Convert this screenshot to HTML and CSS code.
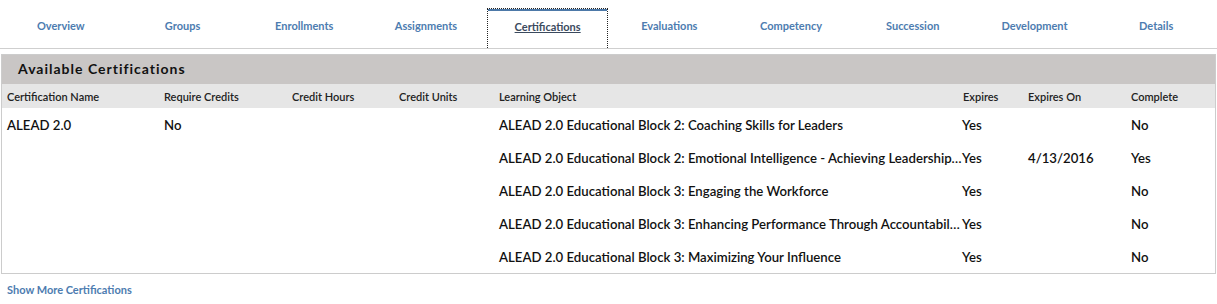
FILE: index.html
```html
<!DOCTYPE html>
<html lang="en">

<head>
    <meta charset="UTF-8">
    <title>Certifications</title>
    <link rel="stylesheet" href="styles.css">
</head>

<body>

    <nav class="tabs">
        <a href="#" class="tab">Overview</a>
        <a href="#" class="tab">Groups</a>
        <a href="#" class="tab">Enrollments</a>
        <a href="#" class="tab">Assignments</a>
        <a href="#" class="tab active">Certifications</a>
        <a href="#" class="tab">Evaluations</a>
        <a href="#" class="tab">Competency</a>
        <a href="#" class="tab">Succession</a>
        <a href="#" class="tab">Development</a>
        <a href="#" class="tab">Details</a>
    </nav>

    <div class="panel">
        <div class="panel-title">Available Certifications</div>
        <table class="certs">
            <colgroup>
                <col style="width: 157px">
                <col style="width: 128px">
                <col style="width: 107px">
                <col style="width: 100px">
                <col style="width: 468px">
                <col style="width: 61px">
                <col style="width: 103px">
                <col>
            </colgroup>
            <thead>
                <tr>
                    <th>Certification Name</th>
                    <th>Require Credits</th>
                    <th>Credit Hours</th>
                    <th>Credit Units</th>
                    <th>Learning Object</th>
                    <th class="exp">Expires</th>
                    <th>Expires On</th>
                    <th>Complete</th>
                </tr>
            </thead>
            <tbody>
                <tr>
                    <td>ALEAD 2.0</td>
                    <td>No</td>
                    <td></td>
                    <td></td>
                    <td class="lo">ALEAD 2.0 Educational Block 2: Coaching Skills for Leaders</td>
                    <td class="exp">Yes</td>
                    <td></td>
                    <td>No</td>
                </tr>
                <tr>
                    <td></td>
                    <td></td>
                    <td></td>
                    <td></td>
                    <td class="lo">ALEAD 2.0 Educational Block 2: Emotional Intelligence - Achieving Leadership Excellence</td>
                    <td class="exp">Yes</td>
                    <td>4/13/2016</td>
                    <td>Yes</td>
                </tr>
                <tr>
                    <td></td>
                    <td></td>
                    <td></td>
                    <td></td>
                    <td class="lo">ALEAD 2.0 Educational Block 3: Engaging the Workforce</td>
                    <td class="exp">Yes</td>
                    <td></td>
                    <td>No</td>
                </tr>
                <tr>
                    <td></td>
                    <td></td>
                    <td></td>
                    <td></td>
                    <td class="lo">ALEAD 2.0 Educational Block 3: Enhancing Performance Through Accountability</td>
                    <td class="exp">Yes</td>
                    <td></td>
                    <td>No</td>
                </tr>
                <tr>
                    <td></td>
                    <td></td>
                    <td></td>
                    <td></td>
                    <td class="lo">ALEAD 2.0 Educational Block 3: Maximizing Your Influence</td>
                    <td class="exp">Yes</td>
                    <td></td>
                    <td>No</td>
                </tr>
            </tbody>
        </table>
    </div>

    <a href="#" class="more">Show More Certifications</a>

</body>

</html>
```

FILE: styles.css
```css
body {
    font-family: 'Lato', 'Liberation Sans', sans-serif;
    background-color: white;
    margin: 0;
    padding: 0;
    color: #111;
}

/* Tab strip */
.tabs {
    display: grid;
    grid-template-columns: repeat(10, 1fr);
    height: 48px;
    border-bottom: 1px solid #cfcfcf;
}

.tab {
    display: flex;
    align-items: center;
    justify-content: center;
    padding-top: 2px;
    font-size: 11px;
    font-weight: bold;
    color: #4d7cb0;
    text-decoration: none;
}

.tab.active {
    margin-top: 8px;
    padding-top: 0;
    padding-bottom: 4px;
    border: 1px dotted #222;
    border-bottom: none;
    box-shadow: inset 0 2px 0 #4d79a8;
    color: #3b4a5e;
    text-decoration: underline;
}

/* Panel */
.panel {
    margin: 5px 1px 0 1px;
    border: 1px solid #cccccc;
    height: 218px;
}

.panel-title {
    background-color: #c9c6c5;
    height: 29px;
    line-height: 27px;
    padding-left: 16px;
    font-size: 14px;
    font-weight: bold;
    letter-spacing: 1px;
    color: #111;
}

.certs {
    width: 100%;
    table-layout: fixed;
    border-collapse: collapse;
}

.certs th {
    background-color: #e6e6e6;
    height: 24px;
    padding: 0 0 0 5px;
    text-align: left;
    font-size: 11px;
    font-weight: 600;
    color: #222;
}

.certs td {
    height: 33px;
    padding: 0 0 0 5px;
    font-size: 13.2px;
    font-weight: 600;
    color: #111;
    white-space: nowrap;
    vertical-align: middle;
}

.certs td.lo {
    overflow: hidden;
    text-overflow: ellipsis;
    padding-right: 0;
}

.certs th.exp {
    padding-left: 1px;
}

.certs td.exp {
    padding-left: 0;
}

.more {
    display: block;
    margin: 9px 0 0 7px;
    font-size: 11px;
    font-weight: bold;
    color: #4d7cb0;
    text-decoration: none;
}
```
